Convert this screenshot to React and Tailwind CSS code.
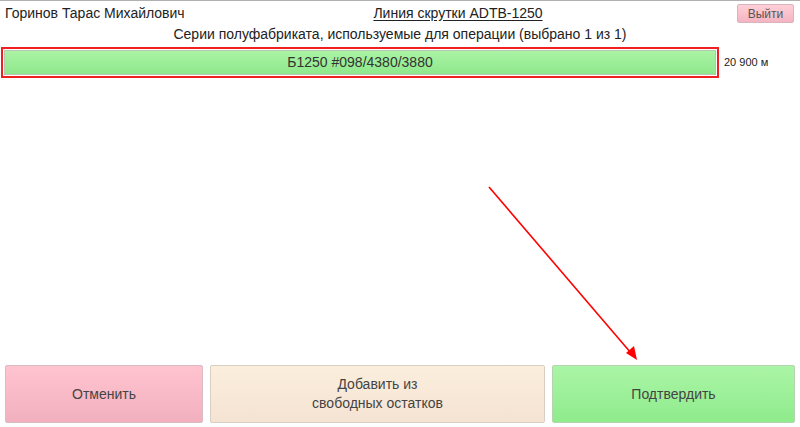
import React from "react";

const font = { fontFamily: '"Liberation Sans", Arial, sans-serif' };

const Header = () => {
  return (
    <div className="flex items-center h-[24px] pl-[5px] pr-[6px] relative">
      <div className="text-[14px] text-[#222] w-[300px]">Горинов Тарас Михайлович</div>
      <div className="flex-1 flex justify-center pr-[126px]">
        <span className="text-[14px] text-[#222] underline underline-offset-2">Линия скрутки ADTB-1250</span>
      </div>
      <button className="w-[57px] h-[19px] text-[12px] text-[#555] border border-[#d9b4bc] rounded-[2px] bg-gradient-to-b from-[#ffd0d8] to-[#f4b4c2] mt-[1px]">
        Выйти
      </button>
    </div>
  );
};

const SeriesRow = () => {
  return (
    <div className="flex items-center pl-px mt-[3px]">
      <div className="w-[718px] h-[31px] border-2 border-[#f02020] p-px">
        <div className="h-full border border-[#b8c8b0] bg-gradient-to-b from-[#aaf3a4] to-[#8ee88b] flex items-center justify-center text-[14px] text-[#333]">
          Б1250 #098/4380/3880
        </div>
      </div>
      <div className="ml-[5px] text-[11px] text-[#222]">20 900 м</div>
    </div>
  );
};

const Arrow = () => (
  <svg className="absolute left-0 top-0 pointer-events-none" width="800" height="427">
    <line x1="489" y1="186" x2="631" y2="352" stroke="#ff0000" strokeWidth="1.6" />
    <polygon points="637,359 626,352 634,345" fill="#ff0000" />
  </svg>
);

export default function App() {
  return (
    <div className="relative w-[800px] h-[427px] bg-white flex flex-col border-t border-[#b0b0b0] overflow-hidden" style={font}>
      <Header />
      <div className="text-center text-[14px] text-[#222] mt-[-1px] leading-[20px]">
        Серии полуфабриката, используемые для операции (выбрано 1 из 1)
      </div>
      <SeriesRow />
      <div className="flex-1" />
      <div className="flex pl-[5px] gap-[7px] pb-[4px]">
        <button className="w-[198px] h-[58px] border border-[#d8bcc2] rounded-[2px] bg-gradient-to-b from-[#ffc4cf] to-[#f2b0bf] text-[14px] text-[#444]">
          Отменить
        </button>
        <button className="w-[335px] h-[58px] border border-[#d8cfc4] rounded-[2px] bg-gradient-to-b from-[#fbeedd] to-[#f5e3d3] text-[14px] text-[#444] leading-[19px]">
          Добавить из
          <br />
          свободных остатков
        </button>
        <button className="w-[243px] h-[58px] border border-[#b4d4b0] rounded-[2px] bg-gradient-to-b from-[#aaf5a6] to-[#8feb8c] text-[14px] text-[#444]">
          Подтвердить
        </button>
      </div>
      <Arrow />
    </div>
  );
}
